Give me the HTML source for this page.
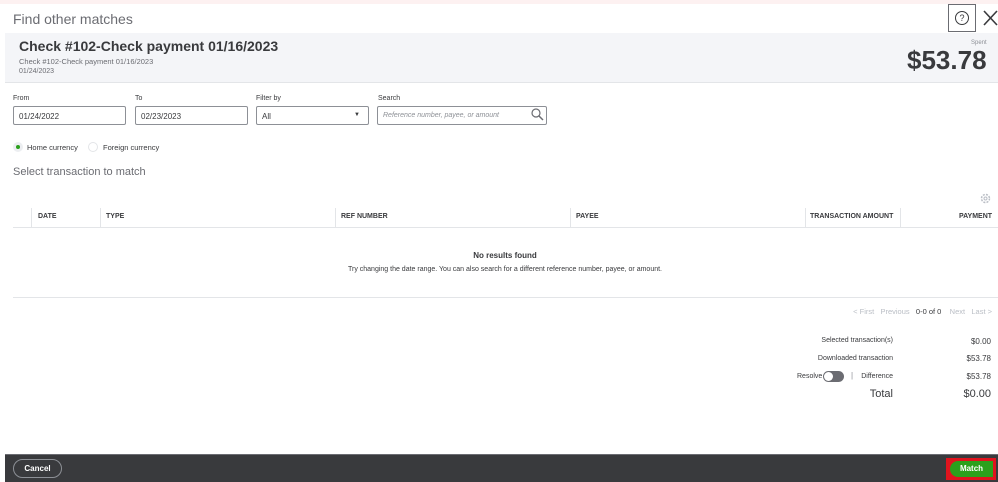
<!DOCTYPE html>
<html><head><meta charset="utf-8"><style>
*{margin:0;padding:0;box-sizing:border-box}
body{width:998px;height:482px;position:relative;background:#fff;font-family:"Liberation Sans",sans-serif;color:#393a3d;overflow:hidden}
.a{position:absolute;white-space:nowrap}
.inp{position:absolute;height:19px;border:1px solid #8d9096;border-radius:2px;font-size:8px;padding:5px 5px;color:#393a3d}
.lbl{position:absolute;font-size:7px;color:#393a3d}
.th{position:absolute;top:213px;font-size:7px;font-weight:bold;color:#393a3d}
.sep{position:absolute;top:208px;width:1px;height:19px;background:#e3e5e8}
.r{position:absolute;font-size:7px;text-align:right}
</style></head><body>
<div class="a" style="left:0;top:0;width:998px;height:4px;background:#fdf1f1"></div>
<div class="a" style="left:13px;top:11px;font-size:14px;color:#6b6c72">Find other matches</div>
<div class="a" style="left:948px;top:4px;width:28px;height:28px;border:1px solid #6b6c72"></div>
<div class="a" style="left:955px;top:11px;width:14px;height:14px;border:1.3px solid #393a3d;border-radius:50%;font-size:9px;text-align:center;line-height:12px">?</div>
<svg class="a" style="left:983px;top:10px" width="15" height="16"><path d="M1 1L14 15M14 1L1 15" stroke="#393a3d" stroke-width="1.6"/></svg>
<div class="a" style="left:5px;top:33px;width:993px;height:50px;background:#f4f5f8;border-bottom:1px solid #e3e5e8"></div>
<div class="a" style="left:19px;top:38px;font-size:14px;font-weight:bold;color:#393a3d">Check #102-Check payment 01/16/2023</div>
<div class="a" style="left:19px;top:57px;font-size:7.5px;color:#6b6c72">Check #102-Check payment 01/16/2023</div>
<div class="a" style="left:19px;top:68px;font-size:7px;color:#6b6c72">01/24/2023</div>
<div class="a" style="left:971px;top:40px;font-size:6px;color:#8d9096">Spent</div>
<div class="a" style="left:907px;top:45px;font-size:26px;font-weight:bold;color:#393a3d">$53.78</div>
<div class="lbl" style="left:13px;top:95px">From</div>
<div class="lbl" style="left:135px;top:95px">To</div>
<div class="lbl" style="left:256px;top:95px">Filter by</div>
<div class="lbl" style="left:378px;top:95px">Search</div>
<div class="inp" style="left:13px;top:106px;width:113px">01/24/2022</div>
<div class="inp" style="left:135px;top:106px;width:113px">02/23/2023</div>
<div class="inp" style="left:256px;top:106px;width:113px">All<span style="position:absolute;right:8px;font-size:6px">▼</span></div>
<div class="inp" style="left:377px;top:106px;width:170px;color:#8d9096;font-style:italic;font-size:7px">Reference number, payee, or amount</div>
<svg class="a" style="left:531px;top:108px" width="13" height="13"><circle cx="5" cy="5" r="4" fill="none" stroke="#6b6c72" stroke-width="1.2"/><path d="M8 8L12 12" stroke="#6b6c72" stroke-width="1.5"/></svg>
<div class="a" style="left:13px;top:142px;width:10px;height:10px;border-radius:50%;background:#eceef1"></div>
<div class="a" style="left:16px;top:145px;width:4px;height:4px;border-radius:50%;background:#2ca01c"></div>
<div class="a" style="left:27px;top:143px;font-size:7.5px">Home currency</div>
<div class="a" style="left:88px;top:142px;width:10px;height:10px;border-radius:50%;border:1px solid #e3e5e8"></div>
<div class="a" style="left:103px;top:143px;font-size:7.5px">Foreign currency</div>
<div class="a" style="left:13px;top:166px;font-size:11px;color:#6b6c72">Select transaction to match</div>
<svg class="a" style="left:980px;top:193px" width="11" height="11"><circle cx="5.5" cy="5.5" r="4" fill="none" stroke="#babec5" stroke-width="1.5" stroke-dasharray="2 1.2"/><circle cx="5.5" cy="5.5" r="1.5" fill="none" stroke="#babec5"/></svg>
<div class="sep" style="left:31px"></div><div class="sep" style="left:100px"></div><div class="sep" style="left:335px"></div><div class="sep" style="left:570px"></div><div class="sep" style="left:805px"></div><div class="sep" style="left:900px"></div>
<div class="th" style="left:38px">DATE</div>
<div class="th" style="left:106px">TYPE</div>
<div class="th" style="left:341px">REF NUMBER</div>
<div class="th" style="left:576px">PAYEE</div>
<div class="th" style="left:810px">TRANSACTION AMOUNT</div>
<div class="th" style="left:959px">PAYMENT</div>
<div class="a" style="left:13px;top:227px;width:985px;height:1px;background:#e3e5e8"></div>
<div class="a" style="left:0;top:251px;width:1010px;text-align:center;font-size:8px;font-weight:bold">No results found</div>
<div class="a" style="left:0;top:266px;width:1010px;text-align:center;font-size:7px">Try changing the date range. You can also search for a different reference number, payee, or amount.</div>
<div class="a" style="left:13px;top:297px;width:985px;height:1px;background:#e3e5e8"></div>
<div class="r" style="right:6px;top:307px;font-size:7.5px;color:#babec5">&lt; First&nbsp;&nbsp;&nbsp;Previous&nbsp;&nbsp;&nbsp;<span style="color:#393a3d">0-0 of 0</span>&nbsp;&nbsp;&nbsp;&nbsp;Next&nbsp;&nbsp;&nbsp;Last &gt;</div>
<div class="r" style="right:105px;top:337px">Selected transaction(s)</div>
<div class="r" style="right:7px;top:337px;font-size:8px">$0.00</div>
<div class="r" style="right:105px;top:355px">Downloaded transaction</div>
<div class="r" style="right:7px;top:354px;font-size:8px">$53.78</div>
<div class="a" style="left:797px;top:373px;font-size:7px">Resolve</div>
<div class="a" style="left:823px;top:371px;width:21px;height:11px;border-radius:6px;background:#6b6c72"></div>
<div class="a" style="left:824px;top:372px;width:9px;height:9px;border-radius:50%;background:#fff"></div>
<div class="a" style="left:851px;top:371px;font-size:8px;color:#8d9096">|</div>
<div class="r" style="right:105px;top:373px">Difference</div>
<div class="r" style="right:7px;top:372px;font-size:8px">$53.78</div>
<div class="r" style="right:105px;top:388px;font-size:11px">Total</div>
<div class="r" style="right:7px;top:388px;font-size:11px">$0.00</div>
<div class="a" style="left:5px;top:454px;width:993px;height:28px;background:#393a3d;border-top:1px solid #6b6c72"></div>
<div class="a" style="left:13px;top:459px;width:49px;height:19px;border:1px solid #8d9096;border-radius:10px;color:#fff;font-size:8px;font-weight:bold;text-align:center;line-height:17px">Cancel</div>
<div class="a" style="left:946px;top:458px;width:50px;height:22px;border:2px solid #e0141e;background:#e0141e"></div>
<div class="a" style="left:950px;top:461px;width:43px;height:16px;background:#2ca01c;border-radius:8px 0 0 8px;color:#fff;font-size:8px;font-weight:bold;text-align:center;line-height:16px">Match</div>
</body></html>
